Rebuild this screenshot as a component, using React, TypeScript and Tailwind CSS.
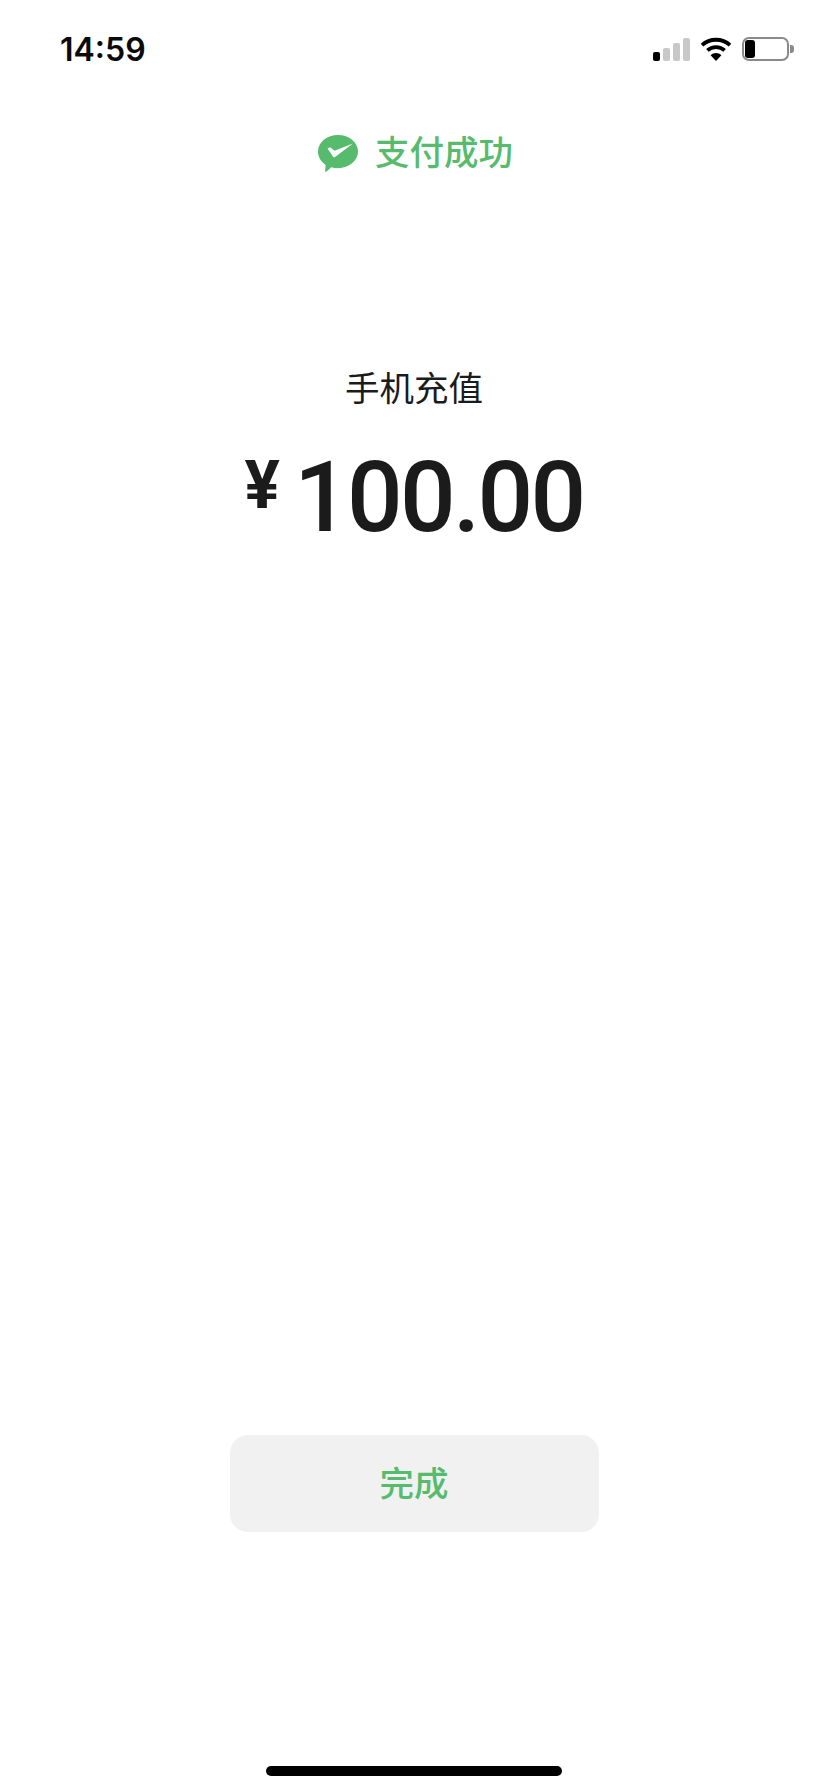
import React from 'react';

const cjk = "font-['Roboto','Noto_Sans_CJK_SC',sans-serif]";

const SignalBars: React.FC = () => (
  <div className="flex items-end gap-[3px] h-[23px]">
    <div className="w-[7px] h-[9px] rounded-[2px] bg-black" />
    <div className="w-[7px] h-[13px] rounded-[2px] bg-[#c8c8c8]" />
    <div className="w-[7px] h-[18px] rounded-[2px] bg-[#c8c8c8]" />
    <div className="w-[7px] h-[23px] rounded-[2px] bg-[#c8c8c8]" />
  </div>
);

const WifiIcon: React.FC = () => (
  <svg width="32" height="24" viewBox="0 0 32 24" fill="none">
    <path d="M2 8.2C9.8 .9 22.2 .9 30 8.2" stroke="#000" strokeWidth="3.8" strokeLinecap="butt" />
    <path d="M7.4 13.4C12.2 9 19.8 9 24.6 13.4" stroke="#000" strokeWidth="3.8" strokeLinecap="butt" />
    <path d="M10.6 18.2C13.7 15.4 18.3 15.4 21.4 18.2L16 24Z" fill="#000" />
  </svg>
);

const Battery: React.FC = () => (
  <div className="flex items-center gap-[1px]">
    <div className="w-[47px] h-[24px] rounded-[7px] border-[2.5px] border-[#8a8a8a] p-[1px] flex">
      <div className="w-[10px] h-full rounded-[3px] bg-black" />
    </div>
    <div className="w-[4px] h-[8px] rounded-r-[3px] bg-[#8a8a8a]" />
  </div>
);

const PayIcon: React.FC = () => (
  <svg width="40" height="37" viewBox="0 0 40 37" className="shrink-0">
    <path
      d="M20 0C31 0 40 7.3 40 16.6C40 25.9 31 33.2 20 33.2C17.6 33.2 15.4 32.9 13.300 32.200L8.600 36.500C7.800 37.200 7 36.800 7.100 35.800L7.600 29.900C2.900 26.800 0 22 0 16.600C0 7.300 9 0 20 0Z"
      fill="#57bb6e"
    />
    <path d="M9.500 13.500L12.200 12.300L16.500 15.800L35 8.500L17 22C16.400 22.500 15.600 22.400 15.200 21.800Z" fill="#fff" />
  </svg>
);

export default function App() {
  return (
    <div className={`w-[828px] h-[1792px] bg-white flex flex-col items-center overflow-hidden ${cjk}`}>
      <div className="w-full h-[100px] shrink-0 flex justify-between pl-[60px] pr-[34px]">
        <span className="mt-[32px] h-[36px] leading-[36px] text-[32px] font-semibold text-[#0a0a0a] font-['Inter',sans-serif]">14:59</span>
        <div className="mt-[37px] h-[24px] flex items-center gap-[10px]">
          <SignalBars />
          <WifiIcon />
          <Battery />
        </div>
      </div>

      <div className="mt-[35px] h-[37px] flex items-center gap-[17px] pl-[3px]">
        <PayIcon />
        <span className="text-[34.5px] leading-[37px] font-medium text-[#57bb6e]">支付成功</span>
      </div>

      <div className="mt-[197px] text-[34.5px] leading-[40px] text-[#1b1b1b]">手机充值</div>

      <div className="mt-[39px] h-[100px] flex items-center text-[#1b1b1b] font-medium">
        <span className="text-[66px] leading-[100px] mr-[14px] -mt-[24px] font-bold">¥</span>
        <span className="text-[98px] leading-[100px] tracking-[-2.7px]">100.00</span>
      </div>

      <div className="flex-1" />

      <button className="w-[369px] h-[97px] rounded-[18px] bg-[#f1f1f1] text-[34.5px] font-medium text-[#57bb6e] pt-[2px]">完成</button>

      <div className="mt-[234px] mb-[16px] w-[296px] h-[10px] rounded-full bg-black" />
    </div>
  );
}
